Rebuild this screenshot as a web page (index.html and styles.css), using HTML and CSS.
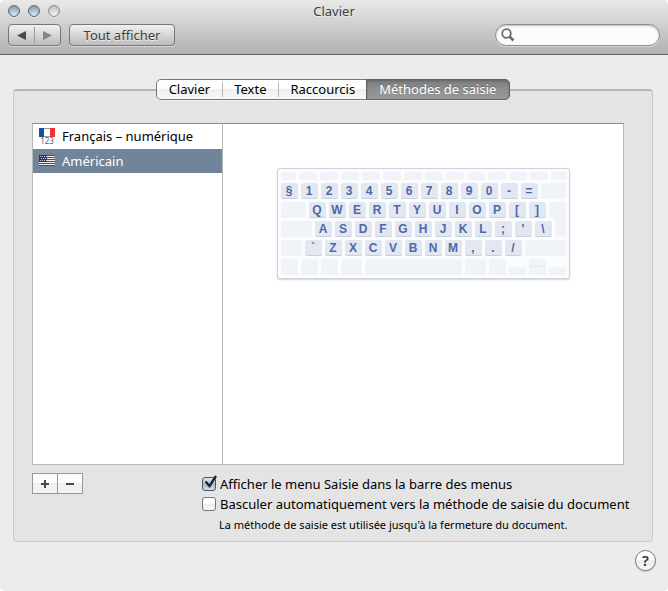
FILE: index.html
```html
<!DOCTYPE html>
<html lang="fr">
<head>
<meta charset="utf-8">
<title>Clavier</title>
<link rel="stylesheet" href="styles.css">
</head>
<body>
<div class="window">
  <header class="titlebar">
    <div class="title-row">
      <div class="lights">
        <button class="light" aria-label="Fermer"></button>
        <button class="light" aria-label="Réduire"></button>
        <button class="light light-off" aria-label="Agrandir"></button>
      </div>
      <h1 class="title">Clavier</h1>
    </div>
    <div class="toolbar">
      <div class="nav">
        <button class="nav-btn" aria-label="Précédent"><svg width="9" height="9" viewBox="0 0 9 9"><path d="M9 0v9L0 4.500z" fill="#484848"/></svg></button>
        <button class="nav-btn" aria-label="Suivant"><svg width="9" height="9" viewBox="0 0 9 9"><path d="M0 0v9l9-4.500z" fill="#858585"/></svg></button>
      </div>
      <button class="show-all">Tout afficher</button>
      <label class="search">
        <svg width="14" height="14" viewBox="0 0 14 14" fill="none" stroke="#6c6c6c"><circle cx="5.500" cy="5.500" r="4.300" stroke-width="1.800"/><path d="M8.500 8.500l4 4" stroke-width="2.600"/></svg>
        <input type="search" aria-label="Rechercher">
      </label>
    </div>
  </header>

  <main class="content">
    <section class="group">
      <nav class="tabs">
        <button class="tab">Clavier</button>
        <button class="tab">Texte</button>
        <button class="tab">Raccourcis</button>
        <button class="tab tab-on">Méthodes de saisie</button>
      </nav>

      <div class="panes">
        <ul class="sources">
          <li class="source">
            <svg width="16" height="18" viewBox="0 0 16 18"><path d="M0 1h5v9H0z" fill="#11519b"/><path d="M5 1h6v9H5z" fill="#fff"/><path d="M11 1h5v9h-5z" fill="#ef3434"/><path d="M5 1.500h6M5 9.500h6" stroke="#999" stroke-width="1"/><text class="flag-text" x="8" y="17" text-anchor="middle">123</text></svg>
            <span>Français – numérique</span>
          </li>
          <li class="source source-on">
            <svg width="16" height="18" viewBox="0 0 16 18"><path d="M0 4h16v10H0z" fill="#f4e9e9"/><path d="M0 3.500h16M0 5.500h16M0 7.500h16M0 9.500h16M0 11.500h16M0 13.500h16" stroke="#9b2f3d"/><path d="M0 3h8v7H0z" fill="#303461"/><path d="M1 4.500h7M2 6.500h6M1 8.500h7" stroke="#c4c8dc" stroke-dasharray="1 1"/></svg>
            <span>Américain</span>
          </li>
        </ul>
        <div class="preview">
          <div class="keyboard">
            <div class="keys keys-fn"><i class="fn-end"></i><i></i><i></i><i></i><i></i><i></i><i></i><i></i><i></i><i></i><i></i><i></i><i></i><i class="fn-end"></i></div>
            <div class="keys"><kbd>§</kbd><kbd>1</kbd><kbd>2</kbd><kbd>3</kbd><kbd>4</kbd><kbd>5</kbd><kbd>6</kbd><kbd>7</kbd><kbd>8</kbd><kbd>9</kbd><kbd>0</kbd><kbd>-</kbd><kbd>=</kbd><i class="fill"></i></div>
            <div class="keys"><i class="tabkey"></i><kbd>Q</kbd><kbd>W</kbd><kbd>E</kbd><kbd>R</kbd><kbd>T</kbd><kbd>Y</kbd><kbd>U</kbd><kbd>I</kbd><kbd>O</kbd><kbd>P</kbd><kbd>[</kbd><kbd>]</kbd><i class="fill enter-top"></i></div>
            <div class="keys"><i class="caps"></i><kbd>A</kbd><kbd>S</kbd><kbd>D</kbd><kbd>F</kbd><kbd>G</kbd><kbd>H</kbd><kbd>J</kbd><kbd>K</kbd><kbd>L</kbd><kbd>;</kbd><kbd>'</kbd><kbd>\</kbd><i class="fill enter-low"></i></div>
            <div class="keys"><i class="shift"></i><kbd>`</kbd><kbd>Z</kbd><kbd>X</kbd><kbd>C</kbd><kbd>V</kbd><kbd>B</kbd><kbd>N</kbd><kbd>M</kbd><kbd>,</kbd><kbd>.</kbd><kbd>/</kbd><i class="fill"></i></div>
            <div class="keys"><i></i><i></i><i></i><i class="cmd"></i><i class="fill"></i><i class="cmd"></i><i></i><i class="half"></i><i class="updown"></i><i class="half"></i></div>
          </div>
        </div>
      </div>

      <div class="footer">
        <div class="add-remove">
          <button aria-label="Ajouter"><svg width="8" height="8" viewBox="0 0 8 8"><path d="M4 0v8M0 4h8" stroke="#484848" stroke-width="2"/></svg></button>
          <button aria-label="Supprimer"><svg width="8" height="8" viewBox="0 0 8 8"><path d="M0 4h8" stroke="#484848" stroke-width="2"/></svg></button>
        </div>
        <div class="options">
          <label class="option">
            <span class="box"><input type="checkbox" checked><svg class="tick" width="16" height="16" viewBox="0 0 16 16"><path d="M3.500 7.500l4 4.500L14 2" fill="none" stroke="#1b2433" stroke-width="2.300"/></svg></span>
            Afficher le menu Saisie dans la barre des menus
          </label>
          <label class="option">
            <span class="box"><input type="checkbox"><svg class="tick" width="16" height="16" viewBox="0 0 16 16"><path d="M3.500 7.500l4 4.500L14 2" fill="none" stroke="#1b2433" stroke-width="2.300"/></svg></span>
            Basculer automatiquement vers la méthode de saisie du document
          </label>
          <p class="note">La méthode de saisie est utilisée jusqu'à la fermeture du document.</p>
        </div>
      </div>
    </section>
    <button class="help" aria-label="Aide">?</button>
  </main>
</div>
</body>
</html>
```
FILE: styles.css
```css
* { box-sizing: border-box; }

body {
  margin: 0;
  background: #fff;
  color: #000;
  font: 13px/20px "Noto Sans", "Open Sans", sans-serif;
}

button, input { font: inherit; color: inherit; margin: 0; padding: 0; }

.window {
  display: flex;
  flex-direction: column;
  min-height: 100vh;
  border-radius: 5px;
  background: #ececec;
  overflow: hidden;
}

.titlebar {
  height: 55px;
  padding: 0 8px;
  border-bottom: 1px solid #666;
  background: linear-gradient(#e9e9e9, #b1b1b1);
}

.title-row {
  display: grid;
  grid-template-columns: 1fr auto 1fr;
  align-items: center;
  height: 21px;
}

.lights { display: flex; gap: 8px; }

.light {
  width: 12px;
  height: 12px;
  border: 1px solid #5f6b76;
  border-radius: 50%;
  background: radial-gradient(circle at 50% 85%, #dce8f1, #a9bac9 50%, #7d8f9f);
  box-shadow: 0 1px #e8e8e8;
}

.light-off {
  border-color: #8e8e8e;
  background: radial-gradient(circle at 50% 85%, #f1f1f1, #d0d0d0 60%, #b4b4b4);
}

.title {
  margin: 0;
  font-size: 13px;
  font-weight: 400;
  color: #3d3d3d;
  text-shadow: 0 1px #eee;
}

.toolbar { display: flex; gap: 8px; padding-top: 3px; }

.nav, .show-all {
  height: 22px;
  border: 1px solid #777;
  border-radius: 4px;
  background: linear-gradient(#f0f0f0, #bdbdbd);
  box-shadow: 0 1px #d8d8d8;
}

.nav { display: flex; align-items: center; width: 53px; }

.nav-btn {
  display: flex;
  flex: 1;
  align-items: center;
  justify-content: center;
  height: 16px;
  border: 0;
  background: none;
}

.nav-btn + .nav-btn { border-left: 1px solid #999; }

.show-all { width: 106px; color: #3d3d3d; text-shadow: 0 1px #eee; }

.search {
  display: flex;
  align-items: center;
  gap: 4px;
  width: 165px;
  height: 22px;
  margin-left: auto;
  padding: 0 6px 0 5px;
  border: 1px solid #8c8c8c;
  border-radius: 11px;
  background: #fcfcfc;
  box-shadow: inset 0 1px 2px #bbb, 0 1px #d8d8d8;
}

.search input { flex: 1; min-width: 0; border: 0; outline: 0; background: none; }

.content {
  display: flex;
  flex: 1;
  flex-direction: column;
  padding: 34px 15px 20px 13px;
}

.group {
  display: flex;
  flex: 1;
  flex-direction: column;
  padding: 0 28px 6px 18px;
  border: 1px solid #c8c8c8;
  border-top: 2px solid #b5b5b5;
  border-radius: 4px;
  background: #e4e4e4;
}

.tabs {
  display: flex;
  align-self: center;
  height: 21px;
  margin: -12px 0 23px 10px;
  border: 1px solid #777;
  border-radius: 5px;
  background: linear-gradient(#fff 45%, #efefef 50%, #f8f8f8);
  box-shadow: 0 1px #f0f0f0;
}

.tab { position: relative; padding: 0 12px; border: 0; background: none; line-height: 19px; }

.tab:nth-child(2)::before, .tab:nth-child(3)::before {
  content: "";
  position: absolute;
  left: 0;
  top: 2px;
  bottom: 2px;
  border-left: 1px solid #bbb;
}

.tab-on {
  margin: -1px;
  padding: 0 13px 0 12px;
  border: 1px solid #636363;
  border-radius: 0 5px 5px 0;
  background: linear-gradient(#7b7b7b, #8c8c8c 40%, #999);
  box-shadow: inset 0 1px 2px #666;
  color: #fff;
  text-shadow: 0 -1px #707070;
}

.panes {
  display: grid;
  flex: 1;
  grid-template-columns: 190px 1fr;
  border: 1px solid #b8b8b8;
  border-top-color: #8b8b8b;
  background: #fff;
}

.sources { margin: 0; padding: 0; list-style: none; border-right: 1px solid #b8b8b8; }

.source { display: flex; align-items: center; gap: 7px; height: 25px; padding: 0 0 1px 6px; }
.source-on { height: 24px; padding-bottom: 0; background: #728499; color: #fff; }

.flag-text { font: 8px "Noto Sans", sans-serif; fill: #47648a; }

.preview { padding: 44px 53px 0; }

.keyboard {
  display: grid;
  grid-template-columns: 100%;
  gap: 3px;
  width: 293px;
  margin: 0 auto;
  padding: 3px;
  border: 1px solid #ccd3dc;
  border-radius: 3px;
  background: #fafcfe;
  box-shadow: 0 1px 2px #ccd3dc;
}

.keys { display: flex; gap: 3px; height: 16px; }
.keys-fn { height: 8px; }

.keys i, .keys kbd { width: 17px; border-radius: 2px; background: #f0f3f8; }

.keys kbd {
  background: #e2e7f1;
  border-bottom: 1px solid #c9d1df;
  color: #4d69a5;
  font: bold 12px/17px "Liberation Sans", sans-serif;
  text-align: center;
}

.keys-fn i { width: 18px; }
.keys .fn-end { width: 15px; }
.keys .tabkey { width: 25px; }
.keys .caps { width: 31px; }
.keys .shift, .keys .cmd { width: 21px; }
.keys .fill { flex: 1; }
.keys .half { height: 8px; align-self: flex-end; }
.keys .updown { background: linear-gradient(#f0f3f8 7px, #e4e8ef 7px 8px, #f0f3f8 8px); }
.keys .enter-top { border-bottom-right-radius: 0; }
.keys .enter-low { margin-top: -3px; border-top-right-radius: 0; border-top-left-radius: 0; }

.footer { display: grid; grid-template-columns: 170px 1fr; padding-top: 8px; margin-right: -20px; }

.add-remove { display: flex; align-self: start; width: 51px; height: 21px; border: 1px solid #999; }

.add-remove button {
  display: flex;
  flex: 1;
  align-items: center;
  justify-content: center;
  border: 0;
  background: linear-gradient(#fcfcfc 50%, #efefef 50%, #f4f4f4);
}

.add-remove button + button { border-left: 1px solid #999; }

.option { display: flex; align-items: center; gap: 4px; height: 20px; white-space: nowrap; }
.options { padding-top: 1px; }

.box { position: relative; width: 14px; height: 14px; }

.box input {
  display: block;
  appearance: none;
  width: 14px;
  height: 14px;
  border: 1px solid #777;
  border-radius: 3px;
  background: linear-gradient(#fff 45%, #ececec 55%, #fafafa);
}

.box input:checked { border-color: #4c5361; background: linear-gradient(#e1e8f0, #a9b9cc 55%, #d5e2ed); }

.tick { position: absolute; left: 0; top: -3px; display: none; }
input:checked + .tick { display: block; }

.note { margin: 1px 0 0 17px; font-size: 11px; white-space: nowrap; }

.help {
  align-self: flex-end;
  width: 21px;
  height: 21px;
  margin: 8px -3px 0 0;
  border: 1px solid #777;
  border-radius: 50%;
  background: linear-gradient(#fff 45%, #ececec 50%, #fafafa);
  font-size: 15px;
  font-weight: 600;
  line-height: 19px;
  color: #333;
  box-shadow: 0 1px 1px #bbb;
}
```
